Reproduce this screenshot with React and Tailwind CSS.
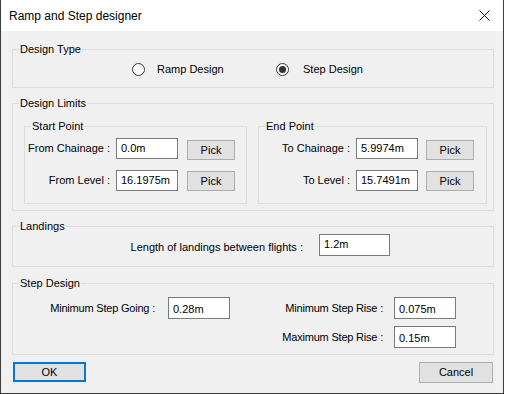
import React from "react";

const font = { fontFamily: '"Liberation Sans", Arial, sans-serif' };

function Group({ title, className = "", children }) {
  return (
    <fieldset className={`border border-[#dcdcdc] ${className}`}>
      <legend className="ml-[6px] px-[1px] text-[11px] leading-[14px] text-black">{title}</legend>
      {children}
    </fieldset>
  );
}

function Field({ value, className = "" }) {
  return (
    <div className={`border border-[#7a7a7a] bg-white pl-[4px] text-[11px] leading-[14px] text-black ${className}`}>
      {value}
    </div>
  );
}

function Btn({ children, className = "", focused = false }) {
  return (
    <button
      className={`flex items-center justify-center bg-[#e1e1e1] text-[11px] text-black ${
        focused ? "border-2 border-[#0078d7]" : "border border-[#adadad]"
      } ${className}`}
    >
      {children}
    </button>
  );
}

function Radio({ checked }) {
  return (
    <span className="flex h-[13px] w-[13px] items-center justify-center rounded-full border border-[#333333] bg-white">
      {checked && <span className="h-[7px] w-[7px] rounded-full bg-[#333333]" />}
    </span>
  );
}

export default function App() {
  return (
    <div className="h-[394px] w-[505px] bg-white" style={font}>
      <div className="flex h-[394px] w-[504px] flex-col border-x border-b border-[#3c3c3c] bg-[#f0f0f0]">
        {/* title bar */}
        <div className="flex h-[31px] items-center justify-between bg-white pl-[8px] pr-[9px]">
          <span className="text-[12px] text-black">Ramp and Step designer</span>
          <svg width="11" height="11" viewBox="0 0 11 11" className="mr-[4px]">
            <path d="M0.5 0.5 L10.5 10.5 M10.5 0.5 L0.5 10.5" stroke="#111" strokeWidth="1" />
          </svg>
        </div>

        <div className="flex flex-col pl-[11px]">
          {/* Design Type */}
          <Group title="Design Type" className="mt-[11px] w-[482px]">
            <div className="flex h-[31px] items-start pl-[119px] pt-[5px]">
              <div className="flex w-[144px] items-center gap-[12px] text-[11px] text-black">
                <Radio />
                <span>Ramp Design</span>
              </div>
              <div className="flex items-center gap-[14px] text-[11px] text-black">
                <Radio checked />
                <span>Step Design</span>
              </div>
            </div>
          </Group>

          {/* Design Limits */}
          <Group title="Design Limits" className="mt-[8px] w-[482px]">
            <div className="flex gap-[11px] pl-[11px] pt-[9px] pb-[6px]">
              <Group title="Start Point" className="w-[223px]">
                <div className="flex flex-col pt-[5px] pb-[12px]">
                  <div className="flex items-start">
                    <div className="flex h-[21px] w-[91px] items-center justify-end pr-[6px] text-[11px] text-black">From Chainage :</div>
                    <Field value="0.0m" className="h-[21px] w-[62px] pt-[2px]" />
                    <Btn className="ml-[9px] mt-[2px] h-[20px] w-[48px]">Pick</Btn>
                  </div>
                  <div className="mt-[10px] flex items-start">
                    <div className="flex h-[21px] w-[91px] items-center justify-end pr-[6px] text-[11px] text-black">From Level :</div>
                    <Field value="16.1975m" className="h-[21px] w-[62px] pt-[2px]" />
                    <Btn className="ml-[9px] mt-[1px] h-[20px] w-[48px]">Pick</Btn>
                  </div>
                </div>
              </Group>
              <Group title="End Point" className="w-[229px]">
                <div className="flex flex-col pt-[5px] pb-[12px]">
                  <div className="flex items-start">
                    <div className="flex h-[21px] w-[97px] items-center justify-end pr-[6px] text-[11px] text-black">To Chainage :</div>
                    <Field value="5.9974m" className="h-[21px] w-[62px] pt-[2px]" />
                    <Btn className="ml-[8px] mt-[2px] h-[20px] w-[48px]">Pick</Btn>
                  </div>
                  <div className="mt-[10px] flex items-start">
                    <div className="flex h-[21px] w-[97px] items-center justify-end pr-[6px] text-[11px] text-black">To Level :</div>
                    <Field value="15.7491m" className="h-[21px] w-[62px] pt-[2px]" />
                    <Btn className="ml-[8px] mt-[1px] h-[20px] w-[48px]">Pick</Btn>
                  </div>
                </div>
              </Group>
            </div>
          </Group>

          {/* Landings */}
          <Group title="Landings" className="mt-[8px] w-[482px]">
            <div className="flex items-center pt-[1px] pb-[10px]">
              <div className="flex h-[21px] w-[290px] items-center justify-end pt-[4px] text-[11px] text-black">
                Length of landings between flights :
              </div>
              <Field value="1.2m" className="ml-[16px] h-[22px] w-[71px] pt-[2px]" />
            </div>
          </Group>

          {/* Step Design */}
          <Group title="Step Design" className="mt-[9px] w-[482px]">
            <div className="flex flex-col pt-[7px] pb-[6px]">
              <div className="flex items-center">
                <div className="w-[142px] text-right text-[11px] tracking-[-0.2px] text-black">Minimum Step Going :</div>
                <Field value="0.28m" className="ml-[13px] h-[22px] w-[62px] pt-[4px]" />
                <div className="w-[153px] text-right text-[11px] tracking-[-0.2px] text-black">Minimum Step Rise :</div>
                <Field value="0.075m" className="ml-[11px] h-[22px] w-[62px] pt-[4px]" />
              </div>
              <div className="mt-[7px] flex items-center">
                <div className="w-[370px] text-right text-[11px] tracking-[-0.2px] text-black">Maximum Step Rise :</div>
                <Field value="0.15m" className="ml-[11px] h-[22px] w-[62px] pt-[4px]" />
              </div>
            </div>
          </Group>

          {/* buttons */}
          <div className="mt-[7px] flex w-[482px] justify-between px-[1px]">
            <Btn focused className="h-[20px] w-[73px]">OK</Btn>
            <Btn className="h-[21px] w-[74px]">Cancel</Btn>
          </div>
        </div>
      </div>
    </div>
  );
}
